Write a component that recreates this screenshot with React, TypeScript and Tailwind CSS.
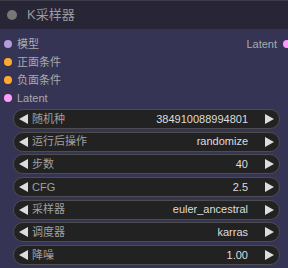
import React from 'react';

const FONT = { fontFamily: '"Liberation Sans", Arial, "Noto Sans CJK SC", sans-serif' };

const inputs = [
  { label: '模型', color: 'bg-[#b39ddb]' },
  { label: '正面条件', color: 'bg-[#ffa931]' },
  { label: '负面条件', color: 'bg-[#ffa931]' },
  { label: 'Latent', color: 'bg-[#ff9cf9]' },
];

const widgets = [
  { label: '随机种', value: '384910088994801' },
  { label: '运行后操作', value: 'randomize' },
  { label: '步数', value: '40' },
  { label: 'CFG', value: '2.5' },
  { label: '采样器', value: 'euler_ancestral' },
  { label: '调度器', value: 'karras' },
  { label: '降噪', value: '1.00' },
];

function Widget({ label, value }: { label: string; value: string }) {
  return (
    <div className="h-[20px] rounded-full bg-[#222222] border border-[#4d4d4d] flex items-center pl-[5px] pr-[5px] text-[11px]">
      <span className="w-0 h-0 border-y-[5px] border-y-transparent border-r-[9px] border-r-[#dddddd] mr-[4px]" />
      <span className="text-[#a0a0a0]">{label}</span>
      <span className="ml-auto text-[#dddddd] mr-[17px]">{value}</span>
      <span className="w-0 h-0 border-y-[5px] border-y-transparent border-l-[9px] border-l-[#dddddd]" />
    </div>
  );
}

export default function App() {
  return (
    <div className="w-[288px] h-[268px] bg-[#353454] overflow-hidden flex flex-col" style={FONT}>
      {/* Title */}
      <div className="h-[29px] shrink-0 bg-[#272536] border-t border-[#3c3b48] flex items-center pl-[7px]">
        <span className="w-[10px] h-[10px] rounded-full bg-[#777777]" />
        <span className="ml-[10px] text-[13px] text-[#9a9a9a]">K采样器</span>
      </div>

      {/* Slots */}
      <div className="relative pt-[6px]">
        {inputs.map(s => (
          <div key={s.label} className="h-[18px] flex items-center pl-[4px] text-[11px] text-[#aaaaaa]">
            <span className={`w-[8px] h-[8px] rounded-full ${s.color}`} />
            <span className="ml-[5px]">{s.label}</span>
          </div>
        ))}
        <div className="absolute right-0 top-[6px] h-[18px] flex items-center text-[11px] text-[#aaaaaa]">
          <span>Latent</span>
          <span className="ml-[6px] w-[8px] h-[8px] rounded-full bg-[#ff9cf9] -mr-[3px]" />
        </div>
      </div>

      {/* Widgets */}
      <div className="flex flex-col gap-[2.67px] pl-[13px] pr-[8px] pt-[2px]">
        {widgets.map(w => (
          <Widget key={w.label} label={w.label} value={w.value} />
        ))}
      </div>
    </div>
  );
}
